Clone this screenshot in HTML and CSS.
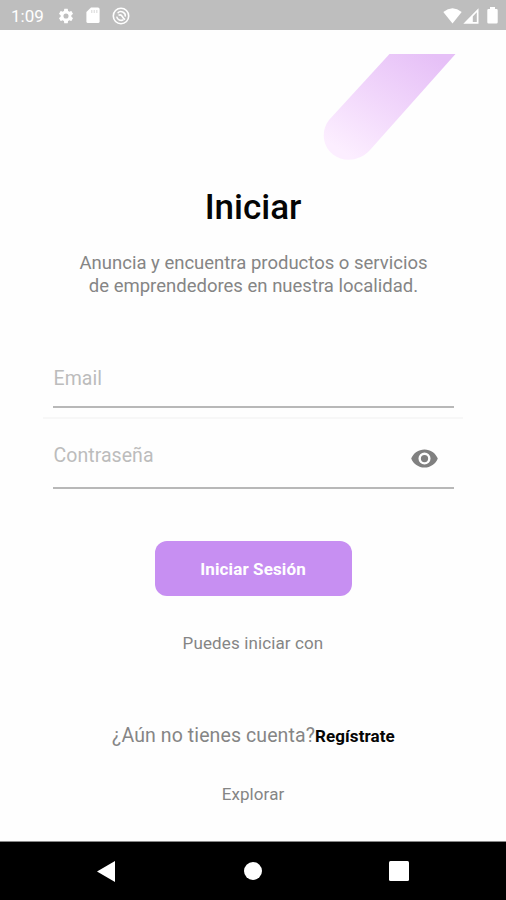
FILE: index.html
```html
<!DOCTYPE html>
<html lang="es">
<head>
<meta charset="utf-8">
<title>Iniciar</title>
<link rel="stylesheet" href="styles.css">
</head>
<body>
<header class="status">
  <span class="clock">1:09</span>
  <svg class="gear" viewBox="0 0 24 24"><path d="M19.14 12.94c.04-.3.06-.61.06-.94 0-.32-.02-.64-.07-.94l2.03-1.58a.49.49 0 0 0 .12-.61l-1.92-3.32a.49.49 0 0 0-.59-.22l-2.39.96a7 7 0 0 0-1.62-.94l-.36-2.54a.48.48 0 0 0-.48-.41h-3.84a.48.48 0 0 0-.47.41l-.36 2.54c-.59.24-1.13.57-1.62.94l-2.39-.96a.48.48 0 0 0-.59.22L2.74 8.87a.48.48 0 0 0 .12.61l2.03 1.58c-.05.3-.09.63-.09.94s.02.64.07.94l-2.03 1.58a.49.49 0 0 0-.12.61l1.92 3.32c.12.22.37.29.59.22l2.39-.96c.5.38 1.03.7 1.62.94l.36 2.54c.05.24.24.41.48.41h3.84c.24 0 .44-.17.47-.41l.36-2.54c.59-.24 1.13-.56 1.62-.94l2.39.96c.22.08.47 0 .59-.22l1.92-3.32a.48.48 0 0 0-.12-.61zM12 15.400a3.400 3.400 0 1 1 0-6.800 3.400 3.400 0 0 1 0 6.800z"/></svg>
  <svg class="sd" viewBox="0 0 14 17"><path d="M5 .5h7a1.600 1.600 0 0 1 1.600 1.600v12.300A1.600 1.600 0 0 1 12 16H2a1.600 1.600 0 0 1-1.600-1.600V5z"/><path fill="#bebebe" opacity=".45" d="M5 3h1.400v3H5zM7.600 3H9v3H7.600zM10.100 3h1.400v3h-1.400z"/></svg>
  <svg class="sync" viewBox="0 0 18 18"><g fill="none" stroke="#fff"><circle cx="9" cy="9" r="7.700" stroke-width="1.600"/><path stroke-width="1.500" d="M5.600 6.200A4.400 4.400 0 0 1 13.300 9.600M11.500 12.600A4.400 4.400 0 0 1 4.700 9.600"/><path stroke-width="1.700" d="M6.500 8.200Q9 7.200 10.200 9.300T13 12.600"/></g></svg>
  <svg class="wifi" viewBox="0 0 19 16"><path d="M.3 4Q9.500-3.300 18.700 4L9.500 15.500z"/></svg>
  <svg class="signal" viewBox="0 0 16 16"><path fill-rule="evenodd" d="M15.500.3v15.400H.3zM13.800 4.300 9.800 8.400V14h4z"/></svg>
  <svg class="battery" viewBox="0 0 11 17"><path d="M3 0h5v2h1.500q1.200 0 1.200 1.200v12q0 1.300-1.200 1.300h-8Q.3 16.500.3 15.200v-12Q.3 2 1.500 2H3z"/></svg>
</header>
<main>
  <svg class="ribbon" viewBox="0 0 134 107">
    <defs><linearGradient id="lilac" gradientUnits="userSpaceOnUse" x1="110" y1="0" x2="40" y2="110"><stop offset="0" stop-color="#e6c0f7"/><stop offset=".5" stop-color="#f1d6fb"/><stop offset="1" stop-color="#fceeff"/></linearGradient></defs>
    <path fill="url(#lilac)" d="M67.500 0H133.500L48 96C38 107 22 109 11 100.500C0 92-1 76 7 66z"/>
  </svg>
  <h1>Iniciar</h1>
  <p class="intro">Anuncia y encuentra productos o servicios<br>de emprendedores en nuestra localidad.</p>
  <div class="field email"><span>Email</span></div>
  <div class="divider"></div>
  <div class="field password"><span>Contraseña</span>
    <svg class="eye" viewBox="0 0 24 24"><path d="M12 4.500C7 4.500 2.730 7.610 1 12c1.730 4.390 6 7.500 11 7.500s9.270-3.110 11-7.500c-1.730-4.390-6-7.500-11-7.500zM12 17a5 5 0 1 1 0-10 5 5 0 0 1 0 10zm0-8a3 3 0 1 0 0 6 3 3 0 0 0 0-6z"/></svg>
  </div>
  <button>Iniciar Sesión</button>
  <p class="with">Puedes iniciar con</p>
  <p class="signup"><span>¿Aún no tienes cuenta?</span><b>Regístrate</b></p>
  <p class="explore">Explorar</p>
</main>
<nav>
  <svg class="back" viewBox="0 0 18 21"><path d="M18 0v21L0 10.500z"/></svg>
  <svg class="home" viewBox="0 0 18 18"><circle cx="9" cy="9" r="9"/></svg>
  <svg class="recent" viewBox="0 0 20 20"><rect width="20" height="20" rx="1.500"/></svg>
</nav>
</body>
</html>
```
FILE: styles.css
```css
* { box-sizing: border-box; }
body {
  margin: 0;
  width: 506px;
  height: 900px;
  display: flex;
  flex-direction: column;
  background: #fefefe;
  font-family: Roboto, "Liberation Sans", sans-serif;
  color: #858585;
  overflow: hidden;
}
svg { display: block; flex: none; }
h1, p { margin: 0; white-space: nowrap; }

.status {
  height: 30px;
  flex: none;
  display: flex;
  align-items: center;
  background: #bebebe;
  color: #fff;
  fill: #fff;
  padding: 1px 8px 0 11px;
}
.clock { width: 46px; font-size: 17px; line-height: 20px; }
.gear { width: 18px; height: 18px; }
.sd { width: 14px; height: 17px; margin-left: 11px; }
.sync { width: 18px; height: 18px; margin-left: 12px; }
.wifi { width: 19px; height: 16px; margin-left: auto; }
.signal { width: 16px; height: 16px; margin-left: 1px; }
.battery { width: 11px; height: 17px; margin-left: 8px; }

main {
  height: 811px;
  flex: none;
  display: flex;
  flex-direction: column;
  align-items: center;
}
.ribbon { width: 134px; height: 107px; margin: 24px 50px 0 0; align-self: flex-end; }
h1 {
  margin-top: 26px;
  font-size: 35px;
  line-height: 42px;
  font-weight: 500;
  color: #050505;
}
.intro {
  margin-top: 23px;
  padding-left: 1px;
  font-size: 18.5px;
  line-height: 23px;
  text-align: center;
}
.field {
  width: 401px;
  display: flex;
  justify-content: space-between;
  border-bottom: 2px solid #b8b8b8;
  padding-left: 1px;
  font-size: 19.5px;
  line-height: 24px;
  letter-spacing: .05px;
  color: #bcbcbc;
}
.email { height: 41px; margin-top: 69px; }
.divider { width: 420px; height: 2px; margin-top: 9px; background: #f7f7f7; }
.password { height: 45px; margin-top: 25px; }
.eye { width: 29px; height: 29px; margin-right: 15px; fill: #808080; }
button {
  width: 197px;
  height: 55px;
  margin-top: 52px;
  padding: 0;
  border: 0;
  border-radius: 12px;
  background: #c78ff2;
  color: #fff;
  font: 700 17px/20px Roboto, "Liberation Sans", sans-serif;
  letter-spacing: .12px;
}
.with { margin-top: 37px; font-size: 17px; line-height: 20px; letter-spacing: .12px; }
.signup {
  display: flex;
  align-items: center;
  margin-top: 71px;
  padding-left: 1px;
  font-size: 19.5px;
  line-height: 24px;
  letter-spacing: .1px;
}
.signup b { font-size: 17px; font-weight: 700; color: #050505; }
.explore { margin-top: 36px; font-size: 17px; line-height: 20px; letter-spacing: .1px; }

nav {
  height: 59px;
  flex: none;
  display: flex;
  align-items: center;
  justify-content: space-between;
  padding: 0 97px;
  background: #000;
  border-top: 1px solid #888;
  fill: #fff;
}
.back { width: 18px; height: 21px; }
.home { width: 18px; height: 18px; margin-left: 2px; }
.recent { width: 20px; height: 20px; }
```
